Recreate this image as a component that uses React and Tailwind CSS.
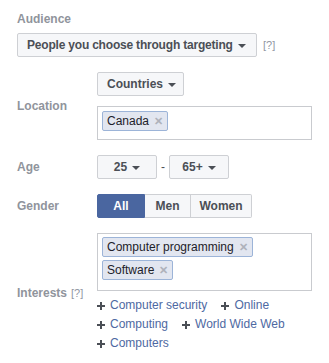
function Caret() {
  return (
    <span className="inline-block w-0 h-0 border-l-[4px] border-r-[4px] border-t-[4px] border-l-transparent border-r-transparent border-t-[#4b4f56] ml-[5px] mt-[1px]" />
  );
}

function DropButton({ children, className = "" }) {
  return (
    <button
      className={`h-[24px] flex items-center border border-[#ced0d4] rounded-[2px] bg-[#f6f7f9] text-[#4b4f56] font-bold text-[12px] leading-[16px] ${className}`}
    >
      {children}
      <Caret />
    </button>
  );
}

function Tag({ label }) {
  return (
    <span className="inline-flex items-center h-[20px] mr-[3px] mb-[3px] px-[4px] border border-[#9cb4d8] rounded-[2px] bg-[#e2e6f0] text-[#1d2129] text-[12px] leading-[16px]">
      {label}
      <span className="ml-[5px] text-[#aeb2bb] text-[11px] font-bold">✕</span>
    </span>
  );
}

function Plus() {
  return (
    <svg width="8" height="8" viewBox="0 0 8 8" className="mr-[5px]">
      <rect x="3" y="0" width="2" height="8" fill="#4b4f56" />
      <rect x="0" y="3" width="8" height="2" fill="#4b4f56" />
    </svg>
  );
}

function Suggestion({ label }) {
  return (
    <span className="inline-flex items-center mr-[14px]">
      <Plus />
      <a className="text-[#4e69a2]">{label}</a>
    </span>
  );
}

const labelCls = "text-[#90949c] font-bold text-[12px] leading-[16px]";

export default function App() {
  return (
    <div
      className="w-[329px] h-[363px] bg-white pl-[17px] pt-[11px] text-[12px]"
      style={{ fontFamily: '"Liberation Sans", Arial, sans-serif' }}
    >
      <div className={labelCls}>Audience</div>
      <div className="mt-[6px] flex items-center">
        <DropButton className="w-[240px] pl-[9px] tracking-[-0.2px]">
          People you choose through targeting
        </DropButton>
        <span className="ml-[6px] text-[#9197a3] text-[11px]">[?]</span>
      </div>

      <div className="mt-[15px] grid grid-cols-[80px_215px] gap-y-[15px] items-center">
        <div className={labelCls}>Location</div>
        <div>
          <DropButton className="w-[87px] pl-[9px]">Countries</DropButton>
          <div className="mt-[10px] h-[34px] border border-[#c9cbcf] pt-[4px] pl-[4px] flex flex-wrap">
            <Tag label="Canada" />
          </div>
        </div>

        <div className={labelCls}>Age</div>
        <div className="flex items-center h-[24px]">
          <DropButton className="w-[60px] justify-center">25</DropButton>
          <span className="mx-[4px] text-[#4b4f56]">-</span>
          <DropButton className="w-[60px] justify-center">65+</DropButton>
        </div>

        <div className={labelCls}>Gender</div>
        <div className="flex">
          <button className="h-[24px] w-[48px] bg-[#4a66a0] border border-[#4a66a0] rounded-l-[2px] text-white font-bold text-[12px] leading-[16px]">
            All
          </button>
          <button className="h-[24px] w-[46px] bg-[#f6f7f9] border border-[#ced0d4] border-l-0 text-[#4b4f56] font-bold text-[12px] leading-[16px]">
            Men
          </button>
          <button className="h-[24px] w-[61px] bg-[#f6f7f9] border border-[#ced0d4] border-l-0 rounded-r-[2px] text-[#4b4f56] font-bold text-[12px] leading-[16px]">
            Women
          </button>
        </div>

        <div className="flex items-center">
          <span className={labelCls}>Interests</span>
          <span className="ml-[4px] text-[#9197a3] text-[11px]">[?]</span>
        </div>
        <div>
          <div className="h-[58px] border border-[#c9cbcf] pt-[3px] pl-[4px] flex flex-col items-start">
            <Tag label="Computer programming" />
            <Tag label="Software" />
          </div>
          <div className="mt-[5px] leading-[19px]">
            <div className="flex">
              <Suggestion label="Computer security" />
              <Suggestion label="Online" />
            </div>
            <div className="flex">
              <Suggestion label="Computing" />
              <Suggestion label="World Wide Web" />
            </div>
            <div className="flex">
              <Suggestion label="Computers" />
            </div>
          </div>
        </div>
      </div>
    </div>
  );
}
